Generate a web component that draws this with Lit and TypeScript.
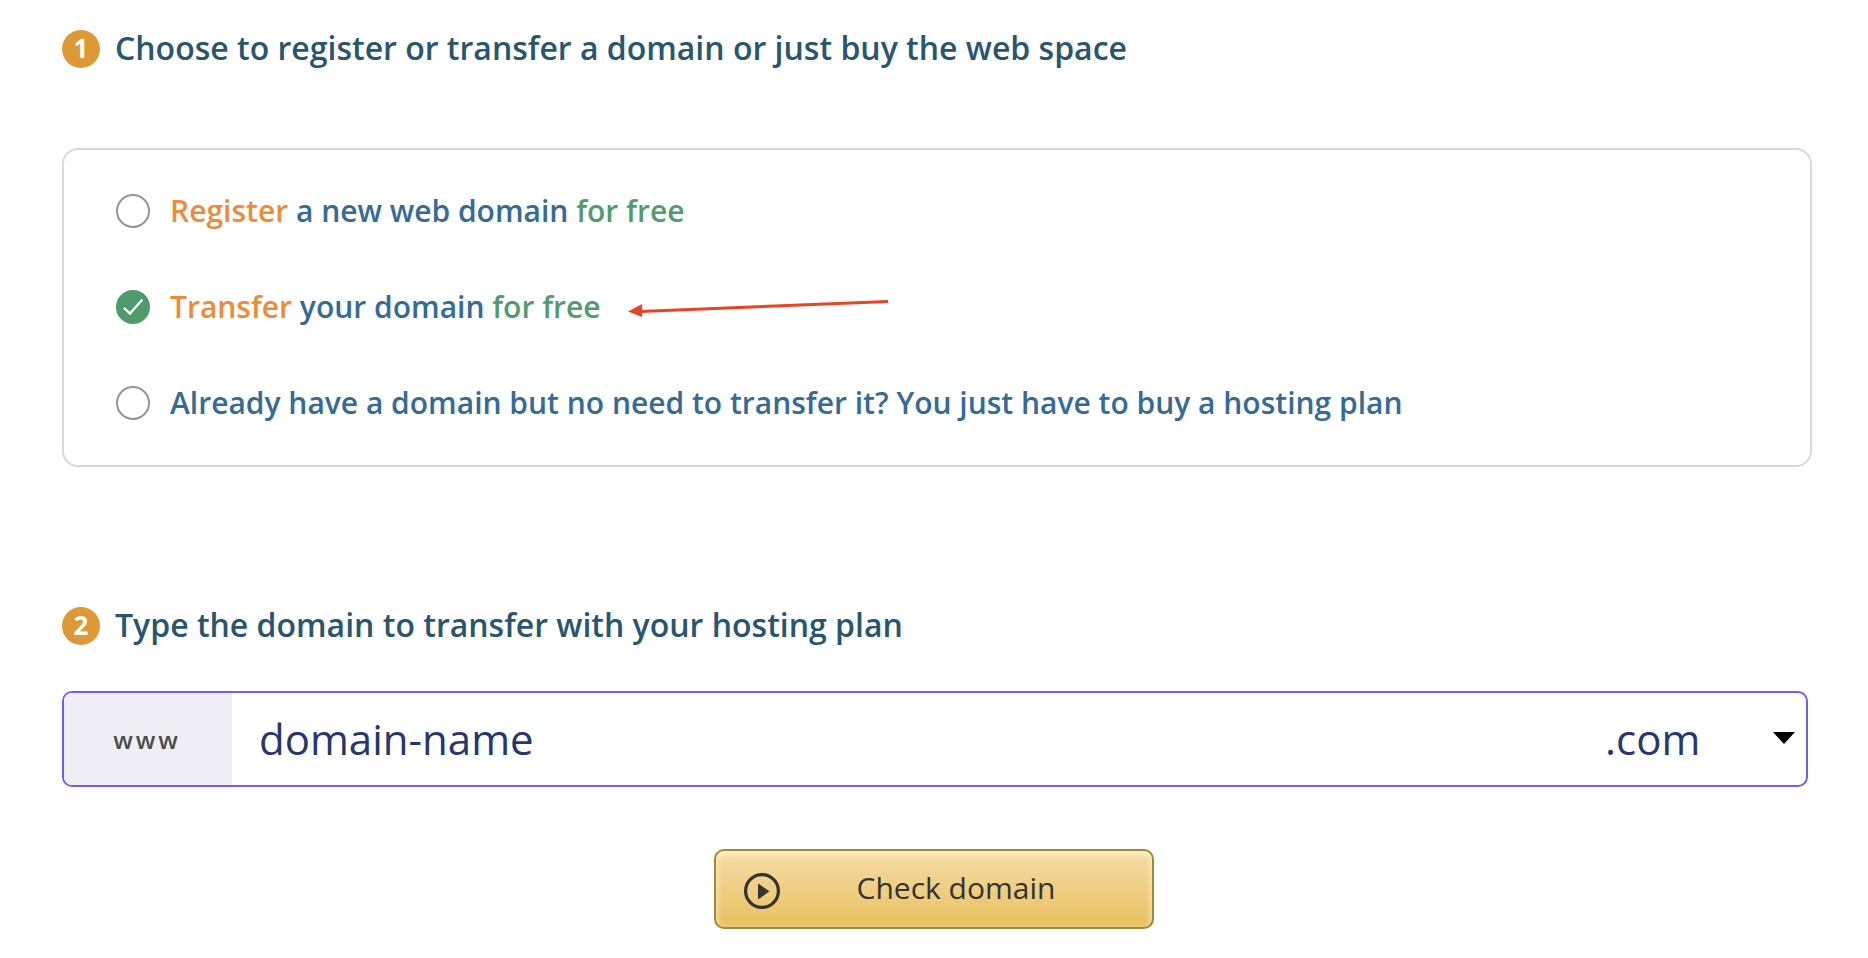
import { LitElement, html, css, nothing } from "lit";
import { customElement, state } from "lit/decorators.js";

type Choice = "register" | "transfer" | "hosting";

@customElement("step-heading")
class StepHeading extends LitElement {
  static properties = { step: { type: Number } };
  declare step: number;

  static styles = css`
    :host {
      display: block;
    }
    .heading {
      display: flex;
      align-items: flex-end;
      gap: 15px;
      margin: 0;
      color: #29566f;
      font-size: 32px;
      font-weight: 600;
      line-height: 40px;
    }
    .badge {
      flex: none;
      width: 38px;
      height: 38px;
      border-radius: 50%;
      background: #de9937;
      color: #fff;
      font-size: 26px;
      font-weight: 700;
      line-height: 36px;
      text-align: center;
    }
  `;

  render() {
    return html`<h2 class="heading"><span class="badge">${this.step}</span><slot></slot></h2>`;
  }
}

@customElement("app-root")
class AppRoot extends LitElement {
  @state() private choice: Choice = "transfer";

  static styles = css`
    :host {
      display: block;
      box-sizing: border-box;
      padding: 28px 56px 28px 62px;
      background: #fff;
      font-family: "Open Sans", "Noto Sans", sans-serif;
    }
    .options {
      margin: 80px 0 138px;
      padding: 37px 52px 38px;
      border: 2px solid #d9d9d9;
      border-radius: 16px;
      display: flex;
      flex-direction: column;
      gap: 48px;
    }
    .option {
      display: flex;
      align-items: center;
      gap: 27px;
    }
    .label {
      display: flex;
      align-items: center;
      gap: 20px;
      color: #356b94;
      font-size: 30px;
      font-weight: 600;
      line-height: 48px;
    }
    .action {
      color: #ee8b38;
    }
    .free {
      color: #519b6e;
    }
    .tick {
      display: grid;
      flex: none;
    }
    .tick > * {
      grid-area: 1 / 1;
    }
    .radio {
      appearance: none;
      box-sizing: border-box;
      width: 34px;
      height: 34px;
      margin: 0;
      border: 2px solid #949494;
      border-radius: 50%;
      background: #fff;
    }
    .radio:checked {
      border-color: #4f9a6c;
      background: #4f9a6c;
    }
    .check {
      width: 34px;
      height: 34px;
      pointer-events: none;
    }
    .arrow {
      flex: none;
      width: 261px;
      height: 20px;
    }
    .field {
      display: flex;
      align-items: stretch;
      box-sizing: border-box;
      height: 96px;
      margin: 46px 4px 62px 0;
      border: 2px solid #7b5ce5;
      border-radius: 10px;
      overflow: hidden;
    }
    .prefix {
      flex: none;
      display: flex;
      align-items: center;
      justify-content: center;
      box-sizing: border-box;
      width: 168px;
      padding: 0 2px 0 0;
      background: #efeef4;
      color: #4c4c4c;
      font-size: 24px;
      font-weight: 600;
      letter-spacing: 3px;
    }
    .name,
    .zone {
      margin: 0;
      border: 0;
      outline: 0;
      background: transparent;
      color: #27366d;
      font-family: inherit;
      font-size: 42px;
    }
    .name {
      flex: 1;
      min-width: 0;
      padding: 0 27px 2px;
    }
    .picker {
      flex: none;
      display: grid;
      align-items: center;
      width: 201px;
    }
    .picker > * {
      grid-area: 1 / 1;
    }
    .zone {
      appearance: none;
      width: 100%;
      height: 100%;
      padding: 0 40px 2px 0;
    }
    .caret {
      justify-self: end;
      width: 22px;
      height: 12px;
      margin: 0 11px 2px 0;
      pointer-events: none;
    }
    .submit {
      display: flex;
      align-items: center;
      box-sizing: border-box;
      width: 440px;
      height: 80px;
      margin: 0 auto;
      padding: 0 28px;
      border: 2px solid #a58640;
      border-radius: 10px;
      background: linear-gradient(#f4dda6, #e9c060);
      box-shadow: inset 0 3px 7px #fff6c8;
      color: #333;
      font-family: "Trebuchet MS", "Open Sans", sans-serif;
      font-size: 30px;
    }
    .center {
      display: flex;
      padding-right: 6px;
    }
    .play {
      flex: none;
      width: 36px;
      height: 36px;
      margin-top: 4px;
    }
    .caption {
      flex: 1;
      padding: 0 0 4px 8px;
      text-align: center;
    }
  `;

  private option(value: Choice, text: unknown, extra: unknown = nothing) {
    return html`
      <div class="option">
        <label class="label">
          <span class="tick">
            <input
              class="radio"
              type="radio"
              name="choice"
              .checked=${this.choice === value}
              @change=${() => (this.choice = value)}
            />
            ${this.choice === value
              ? html`<svg class="check" viewBox="0 0 34 34" aria-hidden="true">
                  <path d="M8 17.8L14 23.6L26.4 9.6" fill="none" stroke="#fff" stroke-width="2.3" />
                </svg>`
              : nothing}
          </span>
          <span>${text}</span>
        </label>
        ${extra}
      </div>
    `;
  }

  render() {
    return html`
      <step-heading .step=${1}>Choose to register or transfer a domain or just buy the web space</step-heading>
      <div class="options" role="radiogroup" aria-label="Domain">
        ${this.option(
          "register",
          html`<span class="action">Register</span> a new web domain <span class="free">for free</span>`
        )}
        ${this.option(
          "transfer",
          html`<span class="action">Transfer</span> your domain <span class="free">for free</span>`,
          html`<svg class="arrow" viewBox="0 0 261 20" aria-hidden="true">
            <path d="M12 14.4L260 4.4" stroke="#ea4324" stroke-width="3" />
            <path d="M0 14.6L14.2 7V20Z" fill="#ea4324" />
          </svg>`
        )}
        ${this.option(
          "hosting",
          "Already have a domain but no need to transfer it? You just have to buy a hosting plan"
        )}
      </div>
      <step-heading .step=${2}>Type the domain to transfer with your hosting plan</step-heading>
      <div class="field">
        <label class="prefix" for="name">www</label>
        <input class="name" id="name" type="text" value="domain-name" />
        <div class="picker">
          <select class="zone" aria-label="Extension">
            <option>.com</option>
          </select>
          <svg class="caret" viewBox="0 0 22 12" aria-hidden="true"><path d="M0 0H22L11 12Z" /></svg>
        </div>
      </div>
      <div class="center">
        <button class="submit" type="button">
          <svg class="play" viewBox="0 0 36 36" aria-hidden="true">
            <circle cx="18" cy="18" r="16.4" fill="none" stroke="#333" stroke-width="3.2" />
            <path d="M14 10.5L25.5 18.3L14 26.5Z" fill="#333" />
          </svg>
          <span class="caption">Check domain</span>
        </button>
      </div>
    `;
  }
}
